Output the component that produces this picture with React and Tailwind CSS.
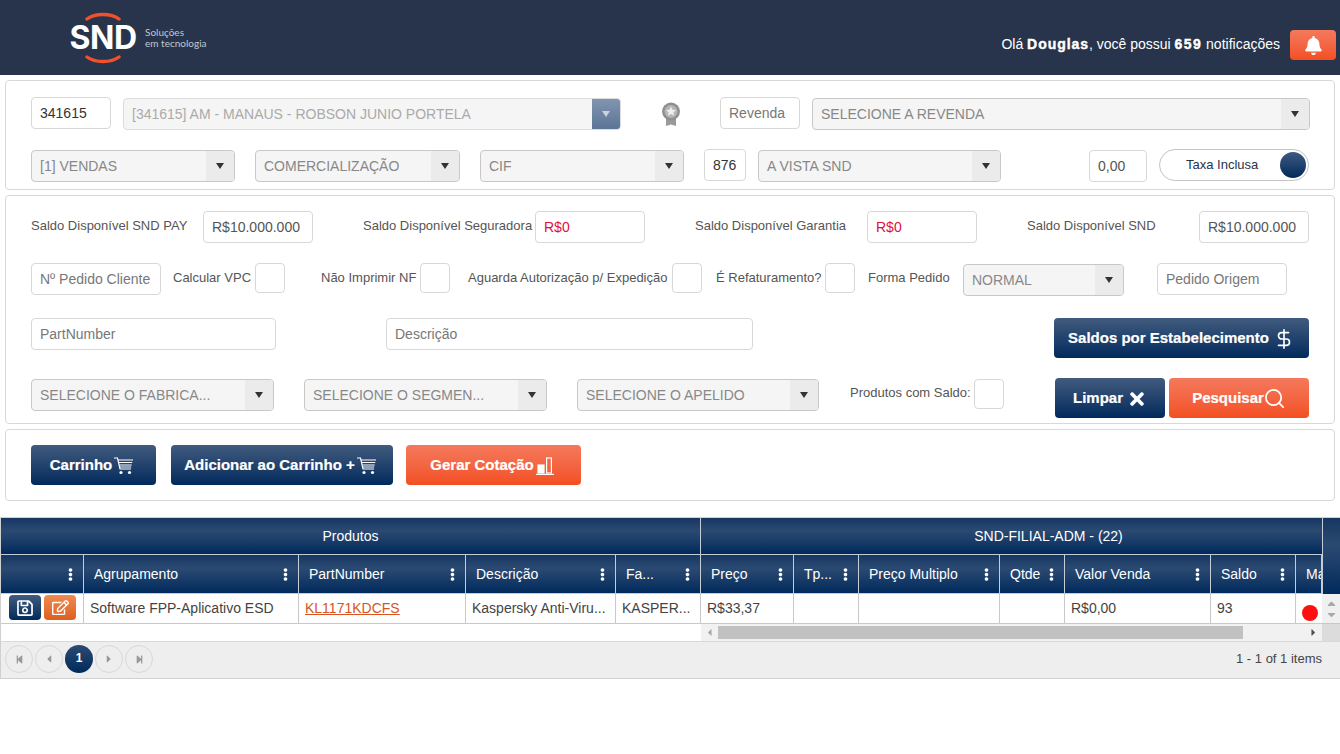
import React from 'react'
import { FaBell, FaTimes, FaEllipsisV, FaRegSave, FaRegEdit, FaStepBackward, FaStepForward, FaCaretLeft, FaCaretRight, FaCaretUp, FaCaretDown } from 'react-icons/fa'
import { Search, DollarSign } from 'lucide-react'

const navy = 'bg-linear-to-b from-[#415b7e] to-[#002a5c]'
const orange = 'bg-linear-to-b from-[#f4795c] to-[#f34f20]'
const headGrad = 'bg-linear-to-b from-[#163762] via-[#2b4a72] via-35% to-[#002a5c]'

function Caret({ className = '' }) {
  return <span className={`w-0 h-0 border-l-[4px] border-r-[4px] border-t-[6px] border-l-transparent border-r-transparent ${className}`} />
}

function Select({ text, w, dark }) {
  return (
    <div className={`${w} h-8 flex items-stretch border rounded bg-[#f5f5f5] overflow-hidden shrink-0 ${dark ? 'border-[#dcdcdc]' : 'border-[#c8c8c8]'}`}>
      <span className={`flex-1 min-w-0 truncate px-2 leading-[31px] text-sm ${dark ? 'text-[#aaa]' : 'text-[#888]'}`}>{text}</span>
      <span className={`w-7 flex items-center justify-center shrink-0 ${dark ? 'bg-linear-to-b from-[#8195b0] to-[#5c7596]' : 'bg-[#ebebeb]'}`}>
        <Caret className={dark ? 'border-t-[#c9d2de]' : 'border-t-[#333]'} />
      </span>
    </div>
  )
}

function Input({ text, w, color = 'text-[#555]', placeholder }) {
  return (
    <div className={`${w} h-8 border border-[#d8d8d8] rounded bg-white px-2 leading-[30px] text-sm shrink-0 whitespace-nowrap overflow-hidden ${placeholder ? 'text-[#777]' : color}`}>
      {text}
    </div>
  )
}

function Check() {
  return <div className="w-[30px] h-[30px] self-start border border-[#d8d8d8] rounded bg-white shrink-0" />
}

function Label({ children, w }) {
  return <span className={`${w} block mb-[2px] text-[13px] leading-4 text-[#555] whitespace-nowrap shrink-0`}>{children}</span>
}

function Btn({ children, w, color }) {
  return (
    <button className={`${w} ${color} h-10 pt-px rounded flex items-center justify-center gap-1 text-white text-[15px] font-bold [-webkit-text-stroke:0.2px_white] shrink-0`}>
      {children}
    </button>
  )
}

function CartIcon() {
  return (
    <svg className="-ml-[2px] mr-[3px]" width="20" height="18" viewBox="0 0 20 18" fill="none" stroke="white" strokeWidth="1.2">
      <path d="M0 1h3.5l2.5 11h11" />
      <path d="M4 3h15M4.8 5.5h13.4M5.3 8h12.4M5.8 10h11.4" />
      <circle cx="7" cy="15.5" r="1.6" fill="white" stroke="none" />
      <circle cx="15.5" cy="15.5" r="1.6" fill="white" stroke="none" />
    </svg>
  )
}

function ChartIcon() {
  return (
    <svg className="-ml-[2px] mr-[3px]" width="18" height="18" viewBox="0 0 18 18" fill="none" stroke="white" strokeWidth="1.2">
      <rect x="2" y="8" width="6" height="8" fill="white" />
      <rect x="10.6" y="1" width="4.8" height="15" />
      <path d="M0 17.4h18" />
    </svg>
  )
}

function Medal() {
  return (
    <svg width="22" height="25" viewBox="0 0 22 25">
      <path d="M6 16h10v8l-5-1.5L6 24z" fill="#9a9a9a" />
      <circle cx="11" cy="9.5" r="9" fill="#8f8f8f" />
      <circle cx="11" cy="9.5" r="6.5" fill="#b5b5b5" />
      <path d="M11 4.5l1.5 3.2 3.4.4-2.5 2.3.7 3.4-3.1-1.7-3.1 1.7.7-3.4-2.5-2.3 3.4-.4z" fill="#eee" />
    </svg>
  )
}

function Head({ w, text, dots = true }) {
  return (
    <div className={`${w} pl-2.5 shrink-0 h-full flex items-center justify-between border-r border-[#c4ccd6] pr-1.5 text-sm text-white whitespace-nowrap overflow-hidden`}>
      <span>{text}</span>
      {dots && <FaEllipsisV className="text-[13px] shrink-0" />}
    </div>
  )
}

function Cell({ w, children, className = '' }) {
  return (
    <div className={`${w} shrink-0 h-full flex items-center pl-1.5 pb-[2px] border-r border-[#c8c8c8] text-sm text-[#444] whitespace-nowrap overflow-hidden ${className}`}>
      {children}
    </div>
  )
}

function Pager({ children, active }) {
  return (
    <span className={`w-7 h-7 rounded-full flex items-center justify-center text-[12px] ${active ? 'bg-linear-to-b from-[#2b4a72] to-[#002a5c] text-white text-sm font-bold' : 'border border-[#d8d8d8] text-[#999]'}`}>
      {children}
    </span>
  )
}

export default function App() {
  return (
    <div className="w-[1340px] h-[754px] bg-white overflow-hidden font-['Liberation_Sans',Arial,sans-serif]">
      {/* topo */}
      <header className="h-[75px] bg-[#27344b] flex items-start justify-between">
        <div className="ml-[70px] mt-3 flex items-center">
          <div className="w-[66px] h-[52px] flex flex-col items-center justify-between">
            <svg width="38" height="9" viewBox="0 0 38 9" fill="none" stroke="#f2502a" strokeWidth="3.4" strokeLinecap="round"><path d="M3 7C11 1 27 1 35 7" /></svg>
            <span className="text-white text-[32px] leading-[26px] font-bold font-['Inter',sans-serif] tracking-[-0.5px]">SND</span>
            <svg width="38" height="9" viewBox="0 0 38 9" fill="none" stroke="#f2502a" strokeWidth="3.4" strokeLinecap="round"><path d="M3 2C11 8 27 8 35 2" /></svg>
          </div>
          <div className="ml-[9px] text-[10px] leading-[11px] text-[#c3c8d0] font-['Lato',sans-serif]">Soluções<br />em tecnologia</div>
        </div>
        <div className="mt-[30px] mr-[4px] flex items-center">
          <span className="-mt-0.5 text-sm text-white">Olá <b className="[-webkit-text-stroke:0.4px_white] tracking-[0.95px]">Douglas</b>, você possui <b className="[-webkit-text-stroke:0.4px_white] tracking-[1.4px]">659</b> notificações</span>
          <span className={`ml-[10px] w-[46px] h-[30px] rounded ${orange} flex items-center justify-center`}>
            <FaBell className="text-white text-[19px]" />
          </span>
        </div>
      </header>

      {/* cabeçalho do pedido */}
      <section className="mx-[5px] mt-[5px] h-[110px] border border-[#d8d8d8] rounded pl-[25px] pt-4">
        <div className="flex items-center h-8">
          <Input text="341615" w="w-20" color="text-[#333]" />
          <div className="ml-3 mt-[2px]"><Select text="[341615] AM - MANAUS - ROBSON JUNIO PORTELA" w="w-[498px]" dark /></div>
          <div className="ml-[39px] mt-[2px] w-[22px] flex"><Medal /></div>
          <div className="ml-[38px]"><Input text="Revenda" w="w-20" placeholder /></div>
          <div className="ml-3 mt-[2px]"><Select text="SELECIONE A REVENDA" w="w-[498px]" /></div>
        </div>
        <div className="flex items-center h-8 mt-5">
          <div className="mt-[2px]"><Select text="[1] VENDAS" w="w-[204px]" /></div>
          <div className="ml-5 mt-[2px]"><Select text="COMERCIALIZAÇÃO" w="w-[205px]" /></div>
          <div className="ml-5 mt-[2px]"><Select text="CIF" w="w-[204px]" /></div>
          <div className="ml-5"><Input text="876" w="w-[42px]" color="text-[#333]" /></div>
          <div className="ml-3 mt-[2px]"><Select text="A VISTA SND" w="w-[243px]" /></div>
          <div className="ml-[88px] mt-[2px]"><Input text="0,00" w="w-[58px]" /></div>
          <div className="ml-3 w-[150px] h-8 border border-[#c4c4c4] rounded-full flex items-center justify-between pl-[26px] pr-[2px]">
            <span className="text-[13px] text-[#27344b]">Taxa Inclusa</span>
            <span className="w-[26px] h-[26px] rounded-full bg-linear-to-b from-[#3d5a80] to-[#002a5c]" />
          </div>
        </div>
      </section>

      {/* filtros */}
      <section className="mx-[5px] mt-[5px] h-[229px] border border-[#d8d8d8] rounded pl-[25px] pt-[15px]">
        <div className="flex items-center h-8">
          <Label w="w-[172px]">Saldo Disponível SND PAY</Label>
          <Input text="R$10.000.000" w="w-[110px]" />
          <div className="ml-[50px] flex items-center"><Label w="w-[172px]">Saldo Disponível Seguradora</Label><Input text="R$0" w="w-[110px]" color="text-[#e0103a]" /></div>
          <div className="ml-[50px] flex items-center"><Label w="w-[172px]">Saldo Disponível Garantia</Label><Input text="R$0" w="w-[110px]" color="text-[#e0103a]" /></div>
          <div className="ml-[50px] flex items-center"><Label w="w-[172px]">Saldo Disponível SND</Label><Input text="R$10.000.000" w="w-[110px]" /></div>
        </div>
        <div className="flex items-center h-8 mt-5">
          <Input text="Nº Pedido Cliente" w="w-[130px]" placeholder />
          <div className="ml-3"><Label w="w-[82px]">Calcular VPC</Label></div>
          <Check />
          <div className="ml-9"><Label w="w-[99px]">Não Imprimir NF</Label></div>
          <Check />
          <div className="ml-[18px]"><Label w="w-[204px]">Aguarda Autorização p/ Expedição</Label></div>
          <Check />
          <div className="ml-[14px]"><Label w="w-[109px]">É Refaturamento?</Label></div>
          <Check />
          <div className="ml-[13px]"><Label w="w-[95px]">Forma Pedido</Label></div>
          <div className="mt-[2px]"><Select text="NORMAL" w="w-[161px]" /></div>
          <div className="ml-[33px]"><Input text="Pedido Origem" w="w-[130px]" placeholder /></div>
        </div>
        <div className="flex items-start mt-[23px] h-10">
          <Input text="PartNumber" w="w-[245px]" placeholder />
          <div className="ml-[110px]"><Input text="Descrição" w="w-[367px]" placeholder /></div>
          <div className="ml-[301px]">
            <Btn w="w-[255px]" color={navy}>Saldos por Estabelecimento <DollarSign size={22} strokeWidth={1.8} /></Btn>
          </div>
        </div>
        <div className="flex items-start mt-5">
          <div className="mt-px flex">
            <Select text="SELECIONE O FABRICA..." w="w-[243px]" />
            <div className="ml-[30px]"><Select text="SELECIONE O SEGMEN..." w="w-[243px]" /></div>
            <div className="ml-[30px]"><Select text="SELECIONE O APELIDO" w="w-[242px]" /></div>
            <div className="ml-[31px] h-[30px] flex items-center"><Label w="w-[124px]">Produtos com Saldo:</Label></div>
            <Check />
          </div>
          <div className="ml-[51px] flex gap-1">
            <Btn w="w-[110px]" color={navy}>Limpar <FaTimes size={20} /></Btn>
            <Btn w="w-[140px]" color={orange}>Pesquisar <Search size={23} strokeWidth={1.8} className="-ml-[5px]" /></Btn>
          </div>
        </div>
      </section>

      {/* ações */}
      <section className="mx-[5px] mt-[5px] h-[72px] border border-[#d8d8d8] rounded pl-[25px] pt-[15px] flex items-start">
        <Btn w="w-[125px]" color={navy}>Carrinho <CartIcon /></Btn>
        <div className="ml-[15px]"><Btn w="w-[222px]" color={navy}>Adicionar ao Carrinho + <CartIcon /></Btn></div>
        <div className="ml-[13px]"><Btn w="w-[175px]" color={orange}>Gerar Cotação <ChartIcon /></Btn></div>
      </section>

      {/* grid */}
      <section className="mt-4 h-[162px] border-y border-l border-[#d0d0d0] flex flex-col">
        <div className="flex">
          <div className="w-[1321px] shrink-0">
            <div className={`h-[37px] flex ${headGrad} border-b border-[#c4ccd6] text-sm text-white`}>
              <div className="w-[700px] shrink-0 flex items-center justify-center border-r border-[#c4ccd6]">Produtos</div>
              <div className="flex-1 pl-[74px] flex items-center justify-center whitespace-nowrap">SND-FILIAL-ADM - (22)</div>
            </div>
            <div className={`h-[39px] flex ${headGrad} border-b border-[#c4ccd6]`}>
              <Head w="w-[83px]" text="" />
              <Head w="w-[215px]" text="Agrupamento" />
              <Head w="w-[167px]" text="PartNumber" />
              <Head w="w-[150px]" text="Descrição" />
              <Head w="w-[85px]" text="Fa..." />
              <Head w="w-[93px]" text="Preço" />
              <Head w="w-[65px]" text="Tp..." />
              <Head w="w-[141px]" text="Preço Multiplo" />
              <Head w="w-[65px]" text="Qtde" />
              <Head w="w-[146px]" text="Valor Venda" />
              <Head w="w-[85px]" text="Saldo" />
              <Head w="w-[26px]" text="Ma" dots={false} />
            </div>
          </div>
          <div className={`flex-1 ${headGrad} border-l border-[#c4ccd6]`} />
        </div>
        <div className="h-[30px] flex border-b border-[#c8c8c8]">
          <Cell w="w-[83px]" className="pl-2 gap-[3px]">
            <span className={`w-8 h-[25px] rounded ${navy} flex items-center justify-center`}><FaRegSave className="text-white text-[18px]" /></span>
            <span className="w-8 h-[25px] rounded bg-linear-to-b from-[#ee8a50] to-[#de5f1c] flex items-center justify-center"><FaRegEdit className="text-white text-[17px]" /></span>
          </Cell>
          <Cell w="w-[215px]">Software FPP-Aplicativo ESD</Cell>
          <Cell w="w-[167px]"><span className="underline text-[#d9541e]">KL1171KDCFS</span></Cell>
          <Cell w="w-[150px]">Kaspersky Anti-Viru...</Cell>
          <Cell w="w-[85px]">KASPER...</Cell>
          <Cell w="w-[93px]">R$33,37</Cell>
          <Cell w="w-[65px]" />
          <Cell w="w-[141px]" />
          <Cell w="w-[65px]" />
          <Cell w="w-[146px]">R$0,00</Cell>
          <Cell w="w-[85px]">93</Cell>
          <div className="w-[27px] flex items-end pl-1.5 pb-[2px]"><span className="w-4 h-4 rounded-full bg-[#ff1010]" /></div>
          <div className="w-[18px] bg-[#f0f0f0] flex flex-col items-center justify-center text-[#a8a8a8] text-[13px] leading-none">
            <FaCaretUp className="-mb-0.5" /><FaCaretDown />
          </div>
        </div>
        <div className="h-[18px] flex border-b border-[#d8d8d8]">
          <div className="w-[700px]" />
          <div className="w-[621px] bg-[#f1f1f1] flex items-center">
            <FaCaretLeft className="w-[17px] text-[11px] text-[#a8a8a8]" />
            <span className="w-[525px] h-[13px] bg-[#c1c1c1]" />
            <span className="flex-1" />
            <FaCaretRight className="w-[17px] text-[11px] text-[#505050]" />
          </div>
          <div className="flex-1 bg-[#dcdcdc]" />
        </div>
        <div className="flex-1 bg-[#eeeeee] flex items-center justify-between pl-1 pr-[18px] pb-[2px]">
          <div className="flex items-center gap-[2px]">
            <Pager><FaStepBackward className="text-[9px]" /></Pager>
            <Pager><FaCaretLeft /></Pager>
            <Pager active>1</Pager>
            <Pager><FaCaretRight /></Pager>
            <Pager><FaStepForward className="text-[9px]" /></Pager>
          </div>
          <span className="text-[13px] text-[#444]">1 - 1 of 1 items</span>
        </div>
      </section>
    </div>
  )
}
